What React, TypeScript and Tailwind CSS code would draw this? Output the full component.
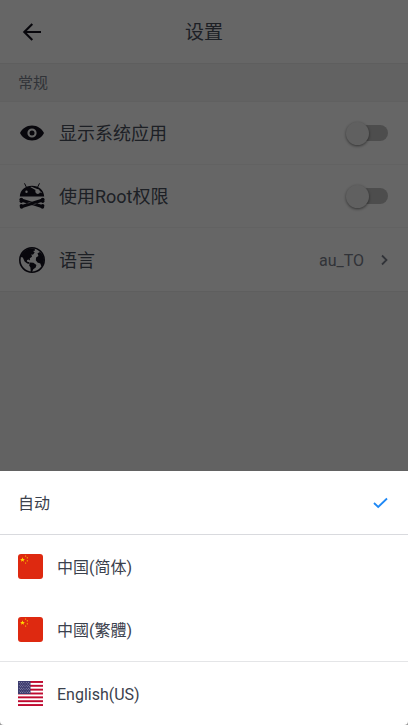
import { useState, type ReactNode } from "react";

interface Language {
  code: string;
  label: string;
  lang: string;
  flag?: "cn" | "us";
  divider?: string;
}

const LANGUAGES: Language[] = [
  { code: "auto", label: "自动", lang: "zh-CN", divider: "border-b border-[#d9dade]" },
  { code: "zh_CN", label: "中国(简体)", lang: "zh-CN", flag: "cn" },
  { code: "zh_TW", label: "中國(繁體)", lang: "zh-TW", flag: "cn", divider: "border-b border-[#e4e5e7]" },
  { code: "en_US", label: "English(US)", lang: "en", flag: "us" },
];

function BackIcon() {
  return (
    <svg viewBox="0 0 20 20" className="h-5 w-5" fill="none" stroke="currentColor" strokeWidth="2.1">
      <path d="M19 10H2.500M10.300 2 2.300 10l8 8" />
    </svg>
  );
}

function EyeIcon() {
  return (
    <svg viewBox="0 0 26 26" className="h-[26px] w-[26px]" fill="currentColor">
      <path
        fillRule="evenodd"
        d="M13 5.500C7.500 5.500 3 8.800 1 13c2 4.300 6.500 7.500 12 7.500S23 17.300 25 13C23 8.800 18.500 5.500 13 5.500Zm0 12.100a4.600 4.600 0 1 1 0-9.200 4.600 4.600 0 0 1 0 9.200Z"
      />
      <circle cx="13" cy="13" r="2.500" />
    </svg>
  );
}

/** Android head with an eye patch over crossed bones */
function RootIcon() {
  return (
    <svg viewBox="0 0 26 26" className="h-[26px] w-[26px]" fill="currentColor">
      <path d="M5.500.300 7.300 4M20.500.300 18.700 4" stroke="currentColor" strokeWidth="1" />
      <path
        fillRule="evenodd"
        d="M.8 13.500C1.200 7 6 2.800 13 2.800S24.800 7 25.200 13.500H.8ZM7.500 7.500a1.200 1.200 0 1 0 0 2.400 1.200 1.200 0 0 0 0-2.400ZM11.200 3.900l5.200 3.100c-.4 2 .5 3.800 2.300 3.900 1.200 0 2-.8 2.200-1.700l2 1-.6-1.300-1.500-.9c-.2-1.300-1.200-2.200-2.600-2.100l-5.600-2.200Z"
      />
      <path d="M3 17.300 23 23.500M23 17.300 3 23.500" stroke="currentColor" strokeWidth="3.100" />
      <path d="m8.500 20.200 3-.9M14.500 21.500l3-.9" stroke="#fff" strokeWidth=".5" />
      <circle cx="2.300" cy="16.600" r="1.900" />
      <circle cx="2.300" cy="18.300" r="1.700" />
      <circle cx="23.700" cy="16.600" r="1.900" />
      <circle cx="23.700" cy="18.300" r="1.700" />
      <circle cx="2.300" cy="22.700" r="1.700" />
      <circle cx="2.600" cy="24" r="1.800" />
      <circle cx="23.700" cy="22.700" r="1.700" />
      <circle cx="23.400" cy="24" r="1.800" />
    </svg>
  );
}

function GlobeIcon() {
  return (
    <svg viewBox="0 0 26 26" className="h-[26px] w-[26px]" fill="currentColor">
      <circle cx="13" cy="13" r="12.200" fill="none" stroke="currentColor" strokeWidth="1.600" />
      <path d="M2 8.500C4 4.500 7 2.200 11 1.200l4.500.3.600 2-2 .6 1.600 1.500-1.800 2.100-1.500-.4.600 2.400-2.200 1.600.2 2.100-1.600-.9-1.600.8.700 1.700 1.800.1.300 2-2.400-.7-2.600-1.900L3.800 10.500 1.500 10l.5-1.500Z" />
      <path d="m11.200 15.500 3.200.3 3 2.100-.7 2.700-2.400 1.700-1.300 2.700-1.200-.1-.4-4.300-1.300-2.400 1.100-2.700Z" />
      <path d="m18.500 6.300 2.500-1.300 2.800 3.200 1.200 4.200-.7 4.500-1.900 2.700-1.100-3.200-2.800-.8-1.700-2.400.3-2.800 2.300-1.500-.9-2.600Z" />
    </svg>
  );
}

function ChinaFlag() {
  return (
    <svg viewBox="0 0 25 25" className="h-[25px] w-[25px] rounded-[3px] bg-[#de2910]" fill="#ffde00">
      <path d="m4.500 3.200.6 1.700H7L5.500 6l.6 1.800-1.600-1.100-1.600 1.100L3.500 6 2 4.900h1.900l.6-1.700Z" />
      <circle cx="7.600" cy="2" r=".6" />
      <circle cx="9.300" cy="3.800" r=".6" />
      <circle cx="9.300" cy="6.800" r=".6" />
      <circle cx="7.600" cy="9" r=".6" />
    </svg>
  );
}

const STRIPES = [0, 2, 4, 6, 8, 10, 12];
const STAR_ROWS = [0, 1, 2, 3, 4, 5, 6, 7];
const STAR_COLS = [0, 1, 2, 3, 4];

function UsFlag() {
  return (
    <svg viewBox="0 0 26 26" className="h-[25px] w-[25px]">
      <rect width="26" height="26" fill="#fff" />
      {STRIPES.map((i) => (
        <rect key={i} y={i * 2} width="26" height="2" fill="#bf0a30" />
      ))}
      <rect width="13" height="13.500" fill="#3c3b6e" />
      {STAR_ROWS.map((row) =>
        STAR_COLS.map((col) => (
          <circle
            key={`${row}-${col}`}
            cx={1.3 + col * 2.4 + (row % 2) * 1.2}
            cy={1.5 + row * 1.5}
            r=".45"
            fill="#c9c9dc"
          />
        ))
      )}
    </svg>
  );
}

function SettingRow({ icon, children }: { icon: ReactNode; children: ReactNode }) {
  return (
    <div className="flex h-[63px] items-center gap-[14px] pr-5 pl-[19px] text-[#14121f]">
      {icon}
      {children}
    </div>
  );
}

function ToggleRow({ icon, id, label }: { icon: ReactNode; id: string; label: string }) {
  const [on, setOn] = useState(false);
  return (
    <SettingRow icon={icon}>
      <label htmlFor={id} className="flex-1 pt-0.5 text-lg text-[#4a505c]">
        {label}
      </label>
      <span className="relative flex h-6 w-[42px] items-center">
        <span className="ml-2 h-4 flex-1 rounded-full bg-[#c0c0c0]" />
        <input
          id={id}
          type="checkbox"
          role="switch"
          checked={on}
          onChange={(e) => setOn(e.target.checked)}
          className="absolute left-0 h-[23px] w-[23px] appearance-none rounded-full bg-[#f1f1f1] shadow-[0_1px_3px_rgba(0,0,0,0.5)] checked:left-5 checked:bg-[#1e88f5]"
        />
      </span>
    </SettingRow>
  );
}

function LanguageSheet({ value, onChange }: { value: string; onChange: (code: string) => void }) {
  return (
    <div className="fixed inset-0 z-10 flex flex-col justify-end bg-black/60">
      <div className="bg-[#999]">
        <ul className="rounded-b-[4px] bg-white">
          {LANGUAGES.map((l) => (
            <li key={l.code} className={l.divider}>
              <button
                type="button"
                lang={l.lang}
                onClick={() => onChange(l.code)}
                className="flex h-[63px] w-full items-center gap-[14px] pr-5 pl-[18px] text-left text-base text-[#3b414d]"
              >
                {l.flag === "cn" && <ChinaFlag />}
                {l.flag === "us" && <UsFlag />}
                <span className="flex-1 pt-0.5">{l.label}</span>
                {value === l.code && (
                  <svg viewBox="0 0 15 15" className="h-[15px] w-[15px]" fill="none" stroke="#1e88f5" strokeWidth="1.800">
                    <path d="M1 8 5.200 12 14 3.500" />
                  </svg>
                )}
              </button>
            </li>
          ))}
        </ul>
      </div>
    </div>
  );
}

export default function App() {
  const [language, setLanguage] = useState("auto");

  return (
    <div className="min-h-screen bg-[#f5f5f5] font-['Roboto','Noto_Sans_CJK_SC',sans-serif]">
      <header className="grid h-16 grid-cols-[40px_1fr_40px] items-center border-b border-[#ececec] bg-white px-3">
        <button type="button" aria-label="返回" className="flex justify-center text-[#14121f]">
          <BackIcon />
        </button>
        <h1 className="pt-1 text-center text-[19px] text-[#4a505c]">设置</h1>
      </header>

      <h2 className="flex h-[38px] items-center border-b border-[#f0f0f0] px-[18px] pt-0.5 text-[15px] text-[#7a808c]">
        常规
      </h2>

      <main className="divide-y divide-[#f5f5f5] border-b border-[#ececec] bg-white">
        <ToggleRow id="system-apps" label="显示系统应用" icon={<EyeIcon />} />
        <ToggleRow id="root" label="使用Root权限" icon={<RootIcon />} />
        <SettingRow icon={<GlobeIcon />}>
          <span className="flex-1 pt-0.5 text-lg text-[#4a505c]">语言</span>
          <button type="button" aria-label="au_TO" className="flex items-center gap-4 text-base text-[#7a808c]">
            <span className="pt-0.5">au_TO</span>
            <svg viewBox="0 0 8 12" className="h-3 w-2" fill="none" stroke="currentColor" strokeWidth="1.800">
              <path d="m2 1.500 4.500 4.500L2 10.500" />
            </svg>
          </button>
        </SettingRow>
      </main>

      <LanguageSheet value={language} onChange={setLanguage} />
    </div>
  );
}
